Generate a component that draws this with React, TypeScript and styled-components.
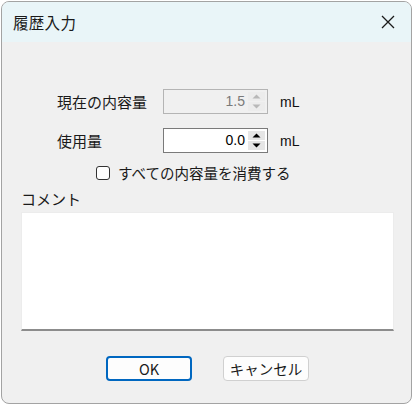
import styled, { createGlobalStyle } from 'styled-components'

const GlobalStyle = createGlobalStyle`
  html, body {
    margin: 0;
    padding: 0;
    background: #ffffff;
  }
  * {
    box-sizing: border-box;
  }
`

const font = `"Noto Sans CJK JP", "Noto Sans", sans-serif`

const Window = styled.div`
  margin: 1px 0 0 1px;
  width: 411px;
  height: 403px;
  border: 1px solid #a3a3a3;
  border-radius: 8px;
  overflow: hidden;
  background: #f0f0f0;
  display: flex;
  flex-direction: column;
  font-family: ${font};
  color: #1a1a1a;
`

const TitleBar = styled.div`
  height: 40px;
  background: #e9f5f8;
  display: flex;
  align-items: center;
  justify-content: space-between;
  padding: 0 12px 0 11px;
`

const Title = styled.span`
  font-size: 15.5px;
  letter-spacing: 0.3px;
`

const CloseButton = styled.div`
  width: 22px;
  height: 22px;
  display: flex;
  align-items: center;
  justify-content: center;
`

const Body = styled.div`
  flex: 1;
  display: flex;
  flex-direction: column;
  padding: 47px 16px 0 19px;
`

const Form = styled.div`
  display: grid;
  grid-template-columns: 94px 105px auto;
  column-gap: 12px;
  row-gap: 14px;
  align-items: center;
  margin-left: 36px;
`

const Label = styled.span`
  font-size: 15px;
`

const Unit = styled.span`
  font-size: 14px;
  font-family: "Liberation Sans", sans-serif;
  color: #111111;
`

const SpinBox = styled.div<{ $disabled?: boolean }>`
  height: 25px;
  display: flex;
  align-items: stretch;
  border: 1px solid ${({ $disabled }) => ($disabled ? '#b4b4b4' : '#7a7a7a')};
  background: ${({ $disabled }) => ($disabled ? '#f0f0f0' : '#ffffff')};
  padding: 2px 2px 2px 0;
`

const SpinValue = styled.span<{ $disabled?: boolean }>`
  flex: 1;
  text-align: right;
  padding-right: 3px;
  font-size: 14px;
  line-height: 19px;
  font-family: "Liberation Sans", sans-serif;
  color: ${({ $disabled }) => ($disabled ? '#7a7a7a' : '#000000')};
`

const SpinButtons = styled.div<{ $disabled?: boolean }>`
  width: 17px;
  display: flex;
  flex-direction: column;
  gap: 1px;
  background: ${({ $disabled }) => ($disabled ? '#f0f0f0' : '#ffffff')};
`

const SpinArrow = styled.div<{ $disabled?: boolean }>`
  flex: 1;
  display: flex;
  align-items: center;
  justify-content: center;
  background: ${({ $disabled }) => ($disabled ? '#ececec' : '#e6e6e6')};
`

const CheckRow = styled.label`
  display: flex;
  align-items: center;
  gap: 8px;
  margin: 9px 0 0 75px;
  font-size: 14.5px;
`

const CheckBox = styled.span`
  width: 14px;
  height: 14px;
  border: 1px solid #333333;
  border-radius: 3px;
  background: #ffffff;
`

const CommentLabel = styled.span`
  font-size: 15px;
  margin-top: 5px;
  line-height: 22px;
`

const CommentBox = styled.div`
  margin-top: 2px;
  width: 373px;
  height: 119px;
  background: #ffffff;
  border: 1px solid #ececec;
  border-bottom: 2px solid #8c8c8c;
`

const ButtonRow = styled.div`
  display: flex;
  gap: 31px;
  margin: 25px 0 0 85px;
`

const DialogButton = styled.div<{ $primary?: boolean }>`
  width: 86px;
  height: 25px;
  border-radius: 4px;
  background: #fdfdfd;
  border: ${({ $primary }) => ($primary ? '2px solid #0067c0' : '1px solid #d0d0d0')};
  display: flex;
  align-items: center;
  justify-content: center;
  font-size: 14.5px;
  color: #1a1a1a;
`

const ArrowUp = ({ color }: { color: string }) => (
  <svg width="9" height="5" viewBox="0 0 9 5">
    <path d="M0.5 4.5 L4.5 0.5 L8.5 4.5 Z" fill={color} />
  </svg>
)

const ArrowDown = ({ color }: { color: string }) => (
  <svg width="9" height="5" viewBox="0 0 9 5">
    <path d="M0.5 0.5 L4.5 4.5 L8.5 0.5 Z" fill={color} />
  </svg>
)

const Spin = ({ value, disabled }: { value: string; disabled?: boolean }) => {
  const c = disabled ? '#b8b8b8' : '#000000'
  return (
    <SpinBox $disabled={disabled}>
      <SpinValue $disabled={disabled}>{value}</SpinValue>
      <SpinButtons $disabled={disabled}>
        <SpinArrow $disabled={disabled}>
          <ArrowUp color={c} />
        </SpinArrow>
        <SpinArrow $disabled={disabled}>
          <ArrowDown color={c} />
        </SpinArrow>
      </SpinButtons>
    </SpinBox>
  )
}

const App = () => {
  return (
    <>
      <GlobalStyle />
      <Window>
        <TitleBar>
          <Title>履歴入力</Title>
          <CloseButton>
            <svg width="14" height="14" viewBox="0 0 14 14">
              <path d="M1 1 L13 13 M13 1 L1 13" stroke="#1a1a1a" strokeWidth="1.3" />
            </svg>
          </CloseButton>
        </TitleBar>
        <Body>
          <Form>
            <Label>現在の内容量</Label>
            <Spin value="1.5" disabled />
            <Unit>mL</Unit>
            <Label>使用量</Label>
            <Spin value="0.0" />
            <Unit>mL</Unit>
          </Form>
          <CheckRow>
            <CheckBox />
            すべての内容量を消費する
          </CheckRow>
          <CommentLabel>コメント</CommentLabel>
          <CommentBox />
          <ButtonRow>
            <DialogButton $primary>OK</DialogButton>
            <DialogButton>キャンセル</DialogButton>
          </ButtonRow>
        </Body>
      </Window>
    </>
  )
}

export default App
